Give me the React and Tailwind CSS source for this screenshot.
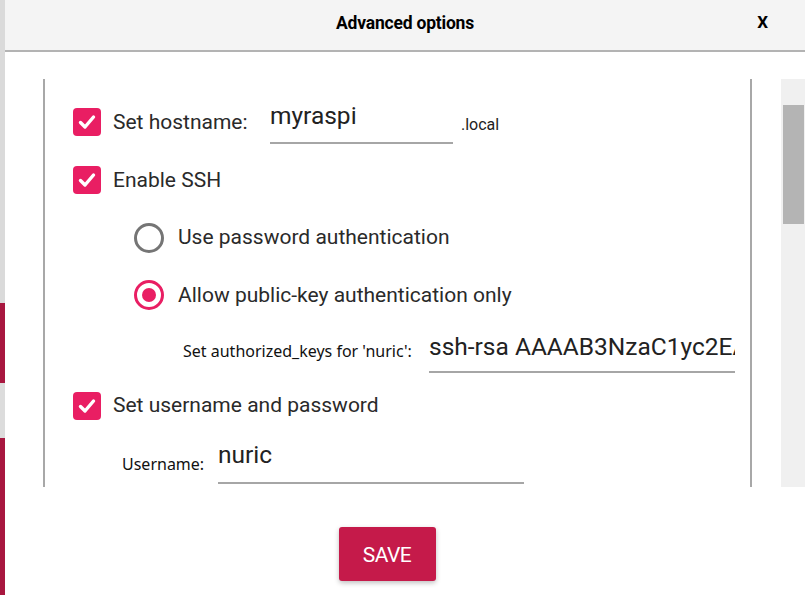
import React from "react";

const font = { fontFamily: "Roboto, 'Noto Sans', sans-serif" };
const smallFont = { fontFamily: "'Noto Sans', 'DejaVu Sans', sans-serif" };

function Check() {
  return (
    <div className="w-[28px] h-[28px] rounded-[4px] bg-[#e91e63] flex items-center justify-center shrink-0">
      <svg width="22" height="22" viewBox="0 0 22 22" fill="none">
        <path d="M4.5 11.5 L9 16 L17.5 6" stroke="white" strokeWidth="3.4" strokeLinecap="round" strokeLinejoin="round" />
      </svg>
    </div>
  );
}

function Radio({ on }) {
  return (
    <div
      className={
        "w-[30px] h-[30px] rounded-full border-[3px] flex items-center justify-center shrink-0 " +
        (on ? "border-[#e91e63]" : "border-[#757575]")
      }
    >
      {on && <div className="w-[14px] h-[14px] rounded-full bg-[#e91e63]" />}
    </div>
  );
}

function Field({ value, width, box }) {
  return (
    <div
      className={
        "border-b-2 border-[#a6a6a6] overflow-hidden whitespace-nowrap text-[24.5px] text-[#222] " + box
      }
      style={{ width }}
    >
      {value}
    </div>
  );
}

export default function App() {
  return (
    <div className="w-[805px] h-[595px] flex overflow-hidden bg-white" style={font}>
      {/* dimmed window behind the dialog */}
      <div className="w-[5px] flex flex-col shrink-0">
        <div className="h-[303px] bg-[#dadada]" />
        <div className="h-[80px] bg-[#a8173f]" />
        <div className="h-[55px] bg-[#dcdcdc]" />
        <div className="flex-1 bg-[#a8173f]" />
      </div>

      <div className="flex-1 flex flex-col">
        <div className="h-[52px] bg-[#f4f4f4] border-b-2 border-[#b3b3b3] grid grid-cols-[1fr_auto_1fr] items-center pb-[4px] shrink-0">
          <div />
          <div className="text-[17.5px] font-bold text-black tracking-[-0.2px]">Advanced options</div>
          <div className="flex justify-end pr-[37px] text-[17px] font-bold text-black">X</div>
        </div>

        <div className="flex pt-[27px]">
          <div className="ml-[38px] w-[709px] h-[408px] border-l-2 border-r-2 border-[#a8a8a8] overflow-hidden pt-[14px] text-[#2a2a2a]">
            <div className="h-[58px] flex items-center pl-[28px]">
              <Check />
              <div className="ml-[12px] text-[21px] w-[157px] pt-[2px]">Set hostname:</div>
              <div className="flex items-start pt-[1px]">
                <Field value="myraspi" width={183} box="h-[43px] leading-[30px]" />
                <div className="ml-[8px] mt-[12px] text-[16px] text-[#222]">.local</div>
              </div>
            </div>
            <div className="h-[58px] flex items-center pl-[28px]">
              <Check />
              <div className="ml-[12px] text-[21px] pt-[1px]">Enable SSH</div>
            </div>
            <div className="h-[57px] flex items-center pl-[89px]">
              <Radio />
              <div className="ml-[14px] text-[21px] pt-[1px]">Use password authentication</div>
            </div>
            <div className="h-[58px] flex items-center pl-[89px]">
              <Radio on />
              <div className="ml-[14px] text-[21px] pt-[1px]">Allow public-key authentication only</div>
            </div>
            <div className="h-[53px] flex items-center pl-[138px]">
              <div className="text-[16px] text-[#111] w-[246px] pt-[1px]" style={smallFont}>
                Set authorized_keys for 'nuric':
              </div>
              <div className="pt-[4px]">
                <Field value="ssh-rsa AAAAB3NzaC1yc2EAAAADAQABAAABAQ" width={306} box="h-[40px] leading-[28px]" />
              </div>
            </div>
            <div className="h-[57px] flex items-center pl-[28px]">
              <Check />
              <div className="ml-[12px] text-[21px] pt-[1px]">Set username and password</div>
            </div>
            <div className="h-[58px] flex items-center pl-[77px]">
              <div className="text-[16px] text-[#111] w-[96px] pt-[2px]" style={smallFont}>
                Username:
              </div>
              <div>
                <Field value="nuric" width={306} box="h-[42px] leading-[26px]" />
              </div>
            </div>
          </div>

          <div className="ml-[29px] w-[24px] h-[408px] bg-[#f0f0f0] pt-[26px] pl-[2px]">
            <div className="w-[21px] h-[119px] bg-[#b4b4b4]" />
          </div>
        </div>

        <div className="flex justify-center pt-[40px] pr-[36px]">
          <button className="w-[97px] h-[54px] rounded-[3px] bg-[#c51a4a] text-white text-[21px] pt-[3px] shadow-[0_2px_5px_rgba(0,0,0,0.25)] tracking-[-0.5px]">
            SAVE
          </button>
        </div>
      </div>
    </div>
  );
}
